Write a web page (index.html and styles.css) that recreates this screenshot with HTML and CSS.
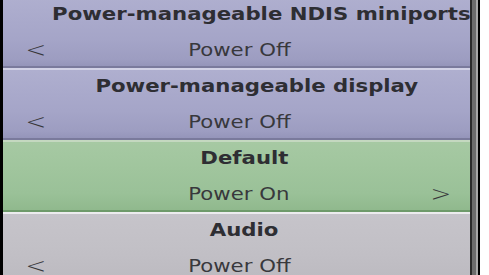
FILE: index.html
```html
<!DOCTYPE html>
<html>
<head>
<meta charset="utf-8">
<link rel="stylesheet" href="styles.css">
</head>
<body>
<div class="screen">
  <div class="list">
    <div class="item item--lav item--first">
      <div class="title title--wide1"><span class="sx">Power-manageable NDIS miniports</span></div>
      <div class="value"><span class="arrow"><span class="sx">&lt;</span></span><span class="val"><span class="sx">Power Off</span></span><span class="arrow arrow--r"></span></div>
    </div>
    <div class="item item--lav">
      <div class="title title--wide2"><span class="sx">Power-manageable display</span></div>
      <div class="value"><span class="arrow"><span class="sx">&lt;</span></span><span class="val"><span class="sx">Power Off</span></span><span class="arrow arrow--r"></span></div>
    </div>
    <div class="item item--green">
      <div class="title"><span class="sx">Default</span></div>
      <div class="value"><span class="arrow"></span><span class="val"><span class="sx">Power On</span></span><span class="arrow arrow--r"><span class="sx">&gt;</span></span></div>
    </div>
    <div class="item item--gray">
      <div class="title"><span class="sx">Audio</span></div>
      <div class="value"><span class="arrow"><span class="sx">&lt;</span></span><span class="val"><span class="sx">Power Off</span></span><span class="arrow arrow--r"></span></div>
    </div>
  </div>
  <div class="scrollbar"><div class="track"></div></div>
</div>
</body>
</html>
```

FILE: styles.css
```css
html, body {
  margin: 0;
  padding: 0;
  background: #ffffff;
}
.screen {
  display: flex;
  width: 489px;
  height: 275px;
  overflow: hidden;
  background: #ffffff;
  font-family: "DejaVu Sans", Verdana, sans-serif;
}
.list {
  width: 467px;
  border-left: 3px solid #000;
  display: flex;
  flex-direction: column;
  flex: none;
  margin-top: -4px;
  height: 283px;
  overflow: hidden;
}
.item {
  flex: none;
  height: 68px;
  border-top: 2px solid #d2d2e6;
  border-bottom: 2px solid #7a7a9c;
  display: flex;
  flex-direction: column;
}
.item--lav {
  background: linear-gradient(to bottom, #afafcf 0%, #a9a9cb 35%, #a5a5c8 60%, #9d9dc1 90%, #9595ba 100%);
}
.item--green {
  border-top-color: #c4d8c0;
  border-bottom-color: #6e9a6a;
  background: linear-gradient(to bottom, #a6c9a3 0%, #a0c59d 40%, #9ac198 75%, #90b98d 100%);
}
.item--gray {
  border-top-color: #ececee;
  border-bottom-color: #9a98a0;
  background: linear-gradient(to bottom, #c6c4ca 0%, #c2c0c6 50%, #bcbac0 100%);
}
.title {
  height: 32px;
  line-height: 32px;
  text-align: center;
  font-weight: bold;
  font-size: 18px;
  color: #2e2e33;
  white-space: nowrap;
  padding-left: 15px;
}
.title--wide1 { padding-left: 50px; }
.title--wide2 { padding-left: 40px; }
.sx {
  display: inline-block;
  transform: scaleX(1.18);
  transform-origin: center;
}
.value {
  height: 33px;
  padding-top: 3px;
  line-height: 34px;
  display: grid;
  grid-template-columns: 62px 1fr 57px;
  font-size: 18px;
  color: #38383c;
  white-space: nowrap;
}
.val {
  text-align: center;
}
.arrow {
  padding-left: 24px;
  font-size: 21px;
  font-weight: 300;
}
.arrow--r {
  padding-left: 19px;
}
.scrollbar {
  flex: none;
  width: 6px;
  height: 275px;
  border-left: 2px solid #2a2a2a;
  border-right: 2px solid #000;
  background: #6c6c6c;
  display: flex;
  justify-content: flex-end;
}
.track {
  width: 2px;
  background: #a8a8a8;
}
```
